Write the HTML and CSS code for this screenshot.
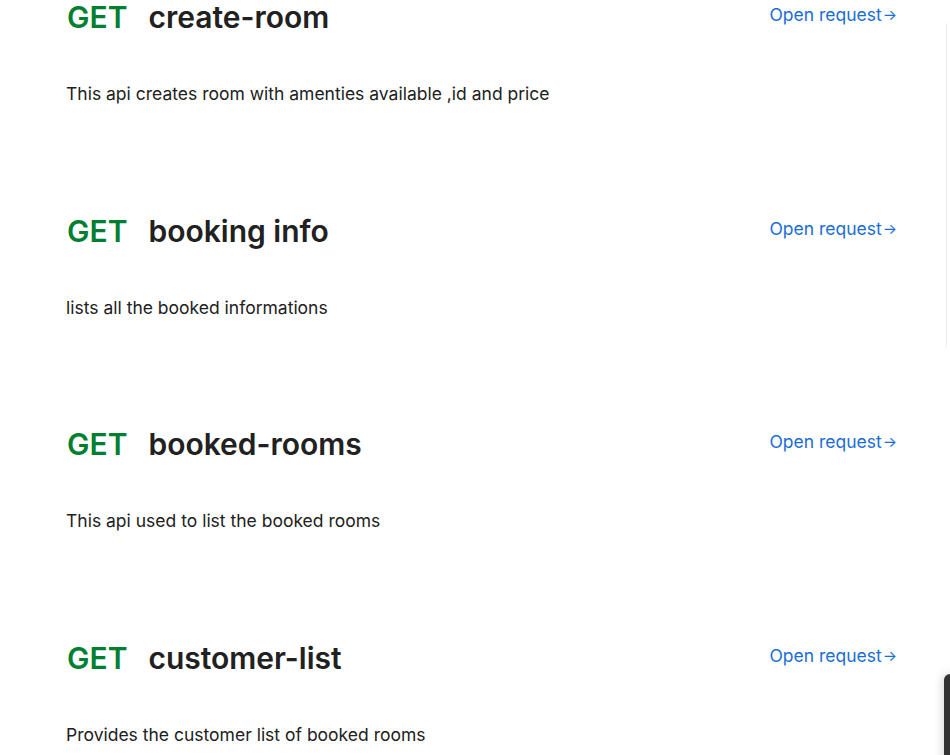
FILE: index.html
```html
<!DOCTYPE html>
<html lang="en">
<head>
<meta charset="utf-8">
<title>API Documentation</title>
<link rel="stylesheet" href="styles.css">
</head>
<body>
<main class="docs">
  <section class="endpoint">
    <div class="endpoint-head">
      <h2 class="endpoint-title"><span class="method">GET</span><span class="name">create-room</span></h2>
      <a class="open-link" href="#">Open request<span class="arrow">→</span></a>
    </div>
    <p class="endpoint-desc">This api creates room with amenties available ,id and price</p>
  </section>
  <section class="endpoint">
    <div class="endpoint-head">
      <h2 class="endpoint-title"><span class="method">GET</span><span class="name">booking info</span></h2>
      <a class="open-link" href="#">Open request<span class="arrow">→</span></a>
    </div>
    <p class="endpoint-desc">lists all the booked informations</p>
  </section>
  <section class="endpoint">
    <div class="endpoint-head">
      <h2 class="endpoint-title"><span class="method">GET</span><span class="name">booked-rooms</span></h2>
      <a class="open-link" href="#">Open request<span class="arrow">→</span></a>
    </div>
    <p class="endpoint-desc">This api used to list the booked rooms</p>
  </section>
  <section class="endpoint">
    <div class="endpoint-head">
      <h2 class="endpoint-title"><span class="method">GET</span><span class="name">customer-list</span></h2>
      <a class="open-link" href="#">Open request<span class="arrow">→</span></a>
    </div>
    <p class="endpoint-desc">Provides the customer list of booked rooms</p>
  </section>
</main>
<div class="side-divider"></div>
<div class="floating-tab"></div>
</body>
</html>
```

FILE: styles.css
```css
html, body {
  margin: 0;
  padding: 0;
  background: #ffffff;
  overflow: hidden;
}

body {
  font-family: Inter, "Noto Sans", sans-serif;
  color: #212121;
  height: 755px;
  position: relative;
}

.docs {
  width: 831px;
  margin-left: 66px;
  display: flex;
  flex-direction: column;
}

.endpoint {
  height: 213.6px;
  flex: none;
  display: flex;
  flex-direction: column;
}

.endpoint-head {
  display: flex;
  justify-content: space-between;
  align-items: flex-start;
  height: 34px;
}

.endpoint-title {
  margin: 0;
  font-size: 30px;
  line-height: 34px;
  font-weight: 600;
  display: flex;
  gap: 21px;
}

.method {
  color: #007f31;
  margin-left: 1px;
}

.name {
  color: #212121;
}

.open-link {
  color: #1a6dd6;
  text-decoration: none;
  font-size: 17.5px;
  line-height: 26px;
  margin-top: 2px;
  display: flex;
  align-items: center;
}

.arrow {
  font-size: 15px;
  margin-left: 1px;
}

.endpoint-desc {
  margin: 47px 0 0 0;
  font-size: 17.5px;
  line-height: 26px;
  color: #212121;
}

.side-divider {
  position: absolute;
  left: 946px;
  top: 23px;
  width: 1px;
  height: 324px;
  background: #ececec;
}

.floating-tab {
  position: absolute;
  left: 944px;
  top: 674px;
  width: 20px;
  height: 120px;
  background: #333333;
  border-top-left-radius: 6px;
  box-shadow: -2px 0 8px rgba(0, 0, 0, 0.15);
}
```
